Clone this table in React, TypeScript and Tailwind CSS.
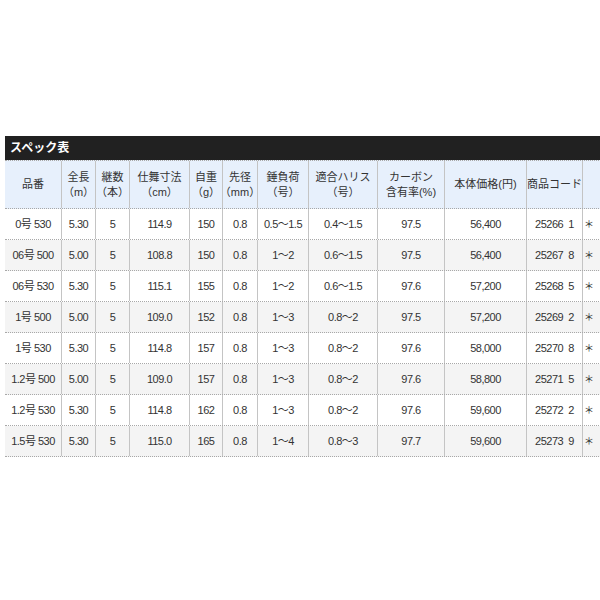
const cols = "grid grid-cols-[57px_34px_34px_60px_33px_35px_51px_69px_67px_82px_56px_40px]";

const headers: string[][] = [
  ["品番"],
  ["全長", "（m）"],
  ["継数", "（本）"],
  ["仕舞寸法", "（cm）"],
  ["自重", "（g）"],
  ["先径", "（mm）"],
  ["錘負荷", "（号）"],
  ["適合ハリス", "（号）"],
  ["カーボン", "含有率(%)"],
  ["本体価格(円)"],
  ["商品コード"],
  [""],
];

const rows: string[][] = [
  ["0号 530", "5.30", "5", "114.9", "150", "0.8", "0.5〜1.5", "0.4〜1.5", "97.5", "56,400", "25266 1", "＊"],
  ["06号 500", "5.00", "5", "108.8", "150", "0.8", "1〜2", "0.6〜1.5", "97.5", "56,400", "25267 8", "＊"],
  ["06号 530", "5.30", "5", "115.1", "155", "0.8", "1〜2", "0.6〜1.5", "97.6", "57,200", "25268 5", "＊"],
  ["1号 500", "5.00", "5", "109.0", "152", "0.8", "1〜3", "0.8〜2", "97.5", "57,200", "25269 2", "＊"],
  ["1号 530", "5.30", "5", "114.8", "157", "0.8", "1〜3", "0.8〜2", "97.6", "58,000", "25270 8", "＊"],
  ["1.2号 500", "5.00", "5", "109.0", "157", "0.8", "1〜3", "0.8〜2", "97.6", "58,800", "25271 5", "＊"],
  ["1.2号 530", "5.30", "5", "114.8", "162", "0.8", "1〜3", "0.8〜2", "97.6", "59,600", "25272 2", "＊"],
  ["1.5号 530", "5.30", "5", "115.0", "165", "0.8", "1〜4", "0.8〜3", "97.7", "59,600", "25273 9", "＊"],
];

export default function App() {
  return (
    <div className="w-[600px] h-[600px] bg-white overflow-hidden pt-[136px] pl-[5px] font-['Liberation_Sans','Noto_Sans_CJK_JP',sans-serif] text-[#333]">
      <div className="w-[620px]">
        <div className="h-6 bg-[#212121] flex items-center pl-[5px] text-white text-xs font-bold">
          スペック表
        </div>
        <div className={`${cols} h-[49px] bg-[#e7f0fc] border-t border-b border-dotted border-[#a8a8a8] text-[11px] leading-[15px]`}>
          {headers.map((h, i) => (
            <div
              key={i}
              className={`flex flex-col items-center justify-center text-center whitespace-nowrap ${i < 11 ? "border-r border-solid border-r-[#c4c4c4]" : ""}`}
            >
              {h.map((line, j) => (
                <span key={j}>{line}</span>
              ))}
            </div>
          ))}
        </div>
        {rows.map((r, ri) => (
          <div
            key={ri}
            className={`${cols} h-[31px] border-b border-dotted border-[#a8a8a8] text-[11px] ${ri % 2 === 1 ? "bg-[#f4f4f4]" : "bg-white"}`}
          >
            {r.map((c, ci) => (
              <div
                key={ci}
                className={`flex items-center whitespace-pre tracking-[-0.5px] ${ci < 11 ? "justify-center border-r border-solid border-r-[#c4c4c4]" : "pl-[1px] text-[10px]"}`}
              >
                {ci === 10 ? c.replace(" ", "  ") : c}
              </div>
            ))}
          </div>
        ))}
      </div>
    </div>
  );
}
